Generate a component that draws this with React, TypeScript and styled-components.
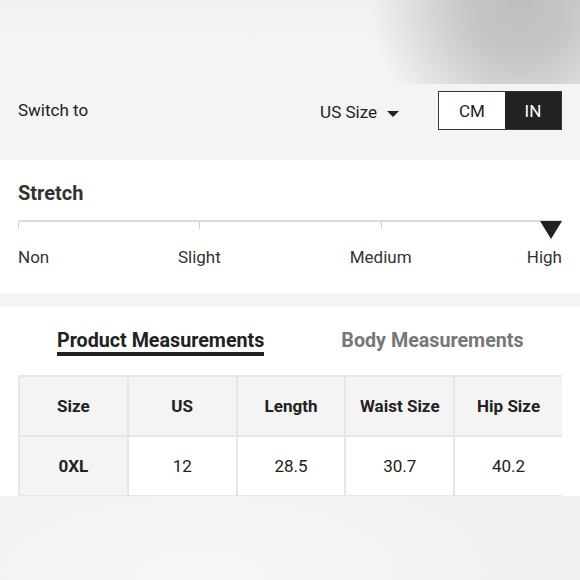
import React from "react";
import styled, { createGlobalStyle } from "styled-components";

const GlobalStyle = createGlobalStyle`
  html, body {
    margin: 0;
    padding: 0;
    background: #f4f4f4;
    font-family: Roboto, "Liberation Sans", sans-serif;
    color: #222;
  }
`;

const Page = styled.div`
  width: 580px;
  height: 580px;
  overflow: hidden;
  display: flex;
  flex-direction: column;
  background: #f4f4f4;
`;

const Backdrop = styled.div<{ $h: number; $top?: boolean }>`
  height: ${(p) => p.$h}px;
  flex: none;
  background: ${(p) =>
    p.$top
      ? "radial-gradient(ellipse 150px 170px at 520px 0px, #bebebe 0%, #c6c6c6 35%, rgba(242,242,242,0) 100%), linear-gradient(180deg, #f1f1f1 0%, #f6f6f6 100%)"
      : "radial-gradient(ellipse 300px 120px at 200px 80px, #f7f7f7 0%, rgba(240,240,240,0) 100%), #f1f1f1"};
`;

const SwitchBar = styled.div`
  height: 76px;
  box-sizing: border-box;
  padding: 7px 18px 0;
  display: flex;
  align-items: flex-start;
  background: #f4f4f4;
`;

const SwitchLabel = styled.div`
  flex: 1;
  font-size: 17px;
  line-height: 38px;
`;

const SizeSelect = styled.div`
  display: flex;
  align-items: center;
  gap: 10px;
  font-size: 17px;
  line-height: 38px;
  margin-right: 39px;
  margin-top: 2px;
`;

const Caret = styled.span`
  width: 0;
  height: 0;
  border-left: 6px solid transparent;
  border-right: 6px solid transparent;
  border-top: 6px solid #222;
  margin-top: 3px;
`;

const Toggle = styled.div`
  display: flex;
  border: 1px solid #333;
  height: 39px;
  box-sizing: border-box;
`;

const ToggleOption = styled.div<{ $active?: boolean }>`
  width: ${(p) => (p.$active ? 56 : 66)}px;
  display: flex;
  align-items: center;
  justify-content: center;
  font-size: 17px;
  background: ${(p) => (p.$active ? "#222" : "#fff")};
  color: ${(p) => (p.$active ? "#fff" : "#222")};
`;

const Section = styled.section`
  background: #fff;
  padding: 0 18px;
`;

const StretchSection = styled(Section)`
  height: 133px;
  box-sizing: border-box;
  padding-top: 21px;
`;

const Title = styled.h3`
  margin: 0;
  font-size: 20px;
  font-weight: 700;
  line-height: 24px;
  color: #333;
`;

const Track = styled.div`
  position: relative;
  margin-top: 15px;
  height: 8px;
  border-top: 2px solid #dcdcdc;
  display: grid;
  grid-template-columns: repeat(3, 1fr);
`;

const Tick = styled.div`
  border-left: 1px solid #cfcfcf;
  height: 7px;
`;

const Marker = styled.span`
  position: absolute;
  right: 0;
  top: -1px;
  width: 0;
  height: 0;
  border-left: 11px solid transparent;
  border-right: 11px solid transparent;
  border-top: 18px solid #222;
`;

const Labels = styled.div`
  display: grid;
  grid-template-columns: repeat(3, 1fr) 0;
  margin-top: 17px;
  font-size: 17px;
  color: #333;
`;

const Label = styled.span<{ $align: "start" | "center" | "end" }>`
  justify-self: start;
  transform: ${(p) =>
    p.$align === "center" ? "translateX(-50%)" : p.$align === "end" ? "translateX(-100%)" : "none"};
  white-space: nowrap;
`;

const Gap = styled.div`
  height: 14px;
  background: #f4f4f4;
`;

const MeasureSection = styled(Section)`
  height: 189px;
  box-sizing: border-box;
  padding-top: 23px;
`;

const Tabs = styled.div`
  display: flex;
  gap: 77px;
  padding-left: 39px;
`;

const Tab = styled.div<{ $active?: boolean }>`
  font-size: 19.7px;
  font-weight: 700;
  line-height: 22px;
  color: ${(p) => (p.$active ? "#222" : "#777")};
  border-bottom: 4px solid ${(p) => (p.$active ? "#222" : "transparent")};
`;

const TableWrap = styled.div`
  margin-top: 19px;
  width: 544px;
  overflow: hidden;
`;

const Table = styled.table`
  border-collapse: collapse;
  table-layout: fixed;
  width: 546px;
`;

const Row = styled.tr`
  height: 60px;
`;

const Cell = styled.td<{ $head?: boolean; $shade?: boolean }>`
  padding: 0;
  text-align: center;
  font-size: 17px;
  border: 2px solid #e6e6e6;
  font-weight: ${(p) => (p.$head ? 700 : 400)};
  color: #222;
  background: ${(p) => (p.$shade ? "#f4f4f4" : "#fff")};
`;

const stretchLevels = ["Non", "Slight", "Medium", "High"];
const headers = ["Size", "US", "Length", "Waist Size", "Hip Size"];
const rows = [["0XL", "12", "28.5", "30.7", "40.2"]];

const App: React.FC = () => {
  return (
    <>
      <GlobalStyle />
      <Page>
        <Backdrop $h={84} $top />
        <SwitchBar>
          <SwitchLabel>Switch to</SwitchLabel>
          <SizeSelect>
            US Size <Caret />
          </SizeSelect>
          <Toggle>
            <ToggleOption>CM</ToggleOption>
            <ToggleOption $active>IN</ToggleOption>
          </Toggle>
        </SwitchBar>

        <StretchSection>
          <Title>Stretch</Title>
          <Track>
            <Tick />
            <Tick />
            <Tick />
            <Marker />
          </Track>
          <Labels>
            {stretchLevels.map((l, i) => (
              <Label key={l} $align={i === 0 ? "start" : i === 3 ? "end" : "center"}>
                {l}
              </Label>
            ))}
          </Labels>
        </StretchSection>

        <Gap />

        <MeasureSection>
          <Tabs>
            <Tab $active>Product Measurements</Tab>
            <Tab>Body Measurements</Tab>
          </Tabs>
          <TableWrap>
            <Table>
              <tbody>
                <Row>
                  {headers.map((h) => (
                    <Cell key={h} $head $shade>
                      {h}
                    </Cell>
                  ))}
                </Row>
                {rows.map((r) => (
                  <Row key={r[0]}>
                    {r.map((c, i) => (
                      <Cell key={i} $head={i === 0} $shade={i === 0}>
                        {c}
                      </Cell>
                    ))}
                  </Row>
                ))}
              </tbody>
            </Table>
          </TableWrap>
        </MeasureSection>

        <Backdrop $h={84} />
      </Page>
    </>
  );
};

export default App;
